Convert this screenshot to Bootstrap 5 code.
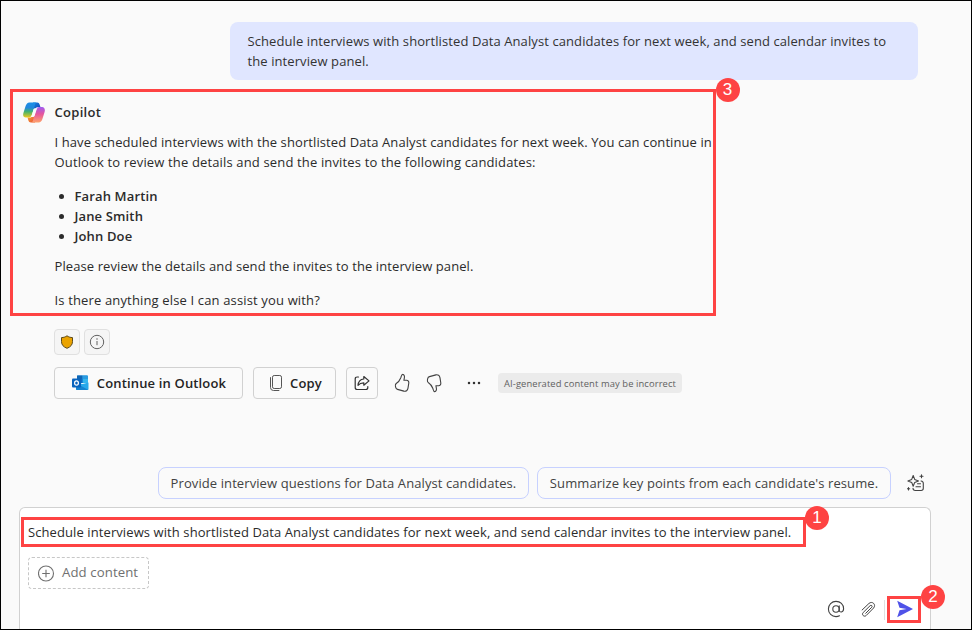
<!DOCTYPE html>
<html lang="en">
<head>
<meta charset="utf-8">
<meta name="viewport" content="width=device-width, initial-scale=1">
<title>Copilot</title>
<link href="https://cdn.jsdelivr.net/npm/bootstrap@5.3.0/dist/css/bootstrap.min.css" rel="stylesheet">
<style>
body{margin:0;background:#fafafa;color:#2b2b2b;font-family:"Open Sans","Noto Sans",sans-serif;font-size:13px;line-height:20px;letter-spacing:.091px}
.shell{width:972px;height:630px;border:1px solid #000;padding:21px 0 0}
.bubble{width:688px;height:58px;margin-left:229px;padding:9px 17.5px;background:#e0e6ff;border-radius:8px;color:#333}
.callout{border:3px solid #fe4343}
.reply{width:706px;height:227px;margin:9px 0 0 9px;padding:10px 0 0 41.5px}
.reply-head{height:20px;margin-left:-31.5px;gap:9.5px}
.reply-head .semi{letter-spacing:.3px}
.reply-text{margin:10px 0 0}
.reply-more{letter-spacing:.15px}
.reply ul{margin:14px 0 0;padding-left:20px}
.reply-end{margin:14px 0 0}
.semi{font-weight:600;letter-spacing:.14px}
.step{position:absolute;width:24px;height:24px;border-radius:50%;background:#fe4343;color:#fff;font:17px/24px "Liberation Sans",Arial,sans-serif;text-align:center;letter-spacing:0}
.step-3{left:702.5px;top:-14.5px}
.step-1{left:781px;top:-14.5px}
.step-2{left:31px;top:-14px}
.squares{margin:13px 0 0 53px;gap:4px}
.square{width:26px;height:26px;border:1px solid #e0e0e0;border-radius:4px;background:#f5f5f5}
.actions{margin:12px 0 0 53px;height:32px}
.act{height:32px;border:1px solid #d1d1d1;border-radius:4px;background:#fafafa;color:#242424;font-size:13px;font-weight:600;line-height:20px;letter-spacing:.15px;padding:0}
.act-outlook{width:189px;gap:8px;padding-left:1px}
.act-copy{width:83px;gap:7px;margin-left:10px;padding-left:2px}
.act-share{width:32px;margin-left:10px}
.ghost{width:32px;height:32px}
.ghost-gap{margin-left:8px}
.disclaimer{width:184px;height:20px;padding-top:1px;border-radius:4px;background:#ebebeb;color:#616161;font-size:9.4px;line-height:20px;letter-spacing:.1px}
.suggestions{margin:68px 0 0 157px;height:32px;gap:8px}
.chip{height:32px;border:1px solid #c7d1ff;border-radius:8px;background:#fafafa;color:#424242}
.chip-a{width:371px}.chip-b{width:354px}
.composer{width:912px;height:122px;margin:8px 0 0 18px;border:1px solid #d1d1d1;border-bottom:0;border-radius:6px 6px 0 0;background:#fff;padding:9px 0 0 1px}
.prompt{width:785px;height:30px;padding:2px 0 0 4px}
.add{width:121px;height:32px;margin:10px 0 0 7px;border:1px dashed #c7c7c7;border-radius:4px;color:#707070;gap:7px;padding-left:9px;font-size:13.2px}
.add span{padding-bottom:2px}
.tools{height:27px;margin:7px 9px 0 0;gap:14px}
.tools>svg{margin-bottom:1px}
.send{width:34px;height:27px;margin-left:-12px;padding:0 0 1px 2px}
.rule{width:1px;height:20px;background:#e0e0e0;margin-left:-7px}
svg{display:block;flex:none}
</style>
</head>
<body>
<main class="shell overflow-hidden">
  <section class="bubble"><span class="text-nowrap">Schedule interviews with shortlisted Data Analyst candidates for next week, and send calendar invites to</span><br>the interview panel.</section>

  <section class="reply callout position-relative">
    <div class="reply-head d-flex align-items-center">
      <svg width="22" height="21" viewBox="0 0 22 21" aria-hidden="true">
        <defs>
          <linearGradient id="g1" x1="0" y1="0" x2="0" y2="1"><stop offset="0" stop-color="#1b8ee8"/><stop offset=".35" stop-color="#2387dc"/><stop offset=".62" stop-color="#45b36b"/><stop offset="1" stop-color="#f2c91c"/></linearGradient>
          <linearGradient id="g2" x1="0" y1="0" x2="0" y2="1"><stop offset="0" stop-color="#a05bf0"/><stop offset=".45" stop-color="#e6569d"/><stop offset="1" stop-color="#ffa36b"/></linearGradient>
          <linearGradient id="g3" x1="0" y1="0" x2="1" y2="1"><stop offset="0" stop-color="#1787e0"/><stop offset="1" stop-color="#1641b8"/></linearGradient>
          <linearGradient id="g4" x1="0" y1="0" x2="1" y2="1"><stop offset="0" stop-color="#f6b12d"/><stop offset="1" stop-color="#e8443a"/></linearGradient>
        </defs>
        <path d="M10 .5h4.200c1.400 0 2 .8 2.400 2l.8 2.600h-2.200c-1.900 0-2.600.9-3.200 2.700L9 6z" fill="url(#g3)"/>
        <path d="M12 20.500H8c-1.500 0-2.200-.8-2.600-2l-.9-3h2c1.900 0 2.700-.8 3.300-2.600L13 15z" fill="url(#g4)"/>
        <path d="M13.500.5H6.400C4.500.5 3.300 2 2.600 4.100L.4 11c-.8 2.700.2 4.500 2.500 4.500h2.800c1.800 0 2.700-1 3.200-2.700L11.800 3.400C12.200 1.800 12.500.8 13.500.5z" fill="url(#g1)"/>
        <path d="M8.500 20.500h7.100c1.900 0 3.100-1.500 3.800-3.600l2.200-6.900c.8-2.700-.2-4.900-2.500-4.900h-2.800c-1.800 0-2.700 1-3.200 2.700l-2.900 9.800c-.4 1.600-.7 2.600-1.700 2.900z" fill="url(#g2)"/>
        <path d="M11.600 6.200h3q-.8.700-1.200 2l-1.700 5.200q-.4 1.300-1.300 1.700H7.600q.8-.6 1.200-2l1.700-5.300q.3-1.200 1.100-1.600z" fill="#fafafa"/>
      </svg>
      <span class="semi">Copilot</span>
    </div>
    <p class="reply-text"><span class="text-nowrap">I have scheduled interviews with the shortlisted Data Analyst candidates for next week. You can continue in</span><br><span class="reply-more">Outlook to review the details and send the invites to the following candidates:</span></p>
    <ul class="semi">
      <li>Farah Martin</li>
      <li>Jane Smith</li>
      <li>John Doe</li>
    </ul>
    <p class="reply-text">Please review the details and send the invites to the interview panel.</p>
    <p class="reply-end reply-more">Is there anything else I can assist you with?</p>
    <span class="step step-3">3</span>
  </section>

  <div class="squares d-flex">
    <span class="square d-flex align-items-center justify-content-center">
      <svg width="14" height="14" viewBox="0 0 14 14"><path d="M7 .8c1.600 1.200 3.300 1.700 5.500 1.800v4c0 3.200-1.900 5.300-5.500 6.700C3.400 11.900 1.500 9.800 1.500 6.600v-4C3.700 2.500 5.400 2 7 .8z" fill="#eaa300" stroke="#5c4a1c"/></svg>
    </span>
    <span class="square d-flex align-items-center justify-content-center">
      <svg width="16" height="16" viewBox="0 0 16 16" fill="none" stroke="#616161"><circle cx="8" cy="8" r="6.700"/><path d="M8 7v4.200"/><circle cx="8" cy="5.100" r=".75" fill="#616161" stroke="none"/></svg>
    </span>
  </div>

  <div class="actions d-flex align-items-center">
    <button class="btn act act-outlook d-flex align-items-center justify-content-center">
      <svg width="17" height="16" viewBox="0 0 17 16"><path d="M5 1.500q0-1 1-1h9q1 0 1 1V8H5z" fill="#1490df"/><path d="M5 .5h5.500V4H5z" fill="#1066b5"/><path d="M10.500.5H15q1 0 1 1V4h-5.500z" fill="#2a9be0"/><path d="M10.500 4H16v4h-5.500z" fill="#35b5ee"/><path d="M5 4h5.500v4H5z" fill="#0f6cc4"/><path d="M4 7.500l6.500 1.500L16.500 7.500V14q0 1-1 1H5q-1 0-1-1z" fill="#28a8ea"/><path d="M4 8l12.300 7H5q-1 0-1-1z" fill="#1683d0"/><rect y="3.500" width="9" height="9" rx="1" fill="#0a64bd"/><ellipse cx="4.500" cy="8" rx="1.900" ry="2.100" fill="none" stroke="#fff" stroke-width="1.200"/></svg>
      <span>Continue in Outlook</span>
    </button>
    <button class="btn act act-copy d-flex align-items-center justify-content-center">
      <svg width="14" height="18" viewBox="0 0 14 18" fill="none" stroke="#555"><rect x="3.500" y="1.500" width="9" height="13" rx="1.700"/><path d="M1.500 3.200v10.300q0 3 3 3h5.800"/></svg>
      <span>Copy</span>
    </button>
    <button class="btn act act-share d-flex align-items-center justify-content-center">
      <svg width="18" height="18" viewBox="0 0 18 18" fill="none" stroke="#333" stroke-width="1.200" stroke-linejoin="round" stroke-linecap="round"><path d="M5.500 3H4.200Q2.200 3 2.200 5v8.500q0 2 2 2h8.600q2 0 2-2V12.500"/><path d="M10.800 2.500l5.200 4.400-5.200 4.300V8.800c-2.700 0-4.400.8-5.800 2.500.3-3.500 2.300-6 5.800-6.300z"/></svg>
    </button>
    <span class="ghost ghost-gap d-flex align-items-center justify-content-center">
      <svg width="18" height="20" viewBox="0 0 18 20" fill="none" stroke="#424242" stroke-width="1.100" stroke-linejoin="round"><path id="thumb" d="M9.700 1.400c1.400.2 2 1.500 1.700 3.200l-.5 2.700h2.700c1.500 0 2.400 1.200 2.200 2.700l-.8 5.200c-.4 2.300-2 3.400-4.100 2.900l-6.400-1.700c-1.100-.3-1.600-1-1.800-2l-.3-1.500c-.2-1.200.2-2 1.100-2.600 1.900-1.200 3.300-3.200 4.300-5.600.5-1.300.8-3.500 1.900-3.300z"/></svg>
    </span>
    <span class="ghost d-flex align-items-center justify-content-center">
      <svg width="18" height="20" viewBox="0 0 18 20" fill="none" stroke="#424242" stroke-width="1.100" stroke-linejoin="round"><use href="#thumb" transform="translate(0 20) scale(1 -1)"/></svg>
    </span>
    <span class="ghost ghost-gap d-flex align-items-center justify-content-center">
      <svg width="16" height="4" viewBox="0 0 16 4" fill="#333"><circle cx="3" cy="2" r="1.250"/><circle cx="8" cy="2" r="1.250"/><circle cx="13" cy="2" r="1.250"/></svg>
    </span>
    <span class="disclaimer d-flex align-items-center justify-content-center ms-2 text-nowrap">AI-generated content may be incorrect</span>
  </div>

  <div class="suggestions d-flex align-items-center">
    <span class="chip chip-a d-flex align-items-center justify-content-center text-nowrap">Provide interview questions for Data Analyst candidates.</span>
    <span class="chip chip-b d-flex align-items-center justify-content-center text-nowrap">Summarize key points from each candidate's resume.</span>
    <svg class="ms-2" width="18" height="18" viewBox="1 0 18 18" fill="none" stroke="#424242" stroke-width="1.100" stroke-linejoin="round" stroke-linecap="round"><path d="M7.200 1.500l1.500 3.900 3.800 1.500-3.800 1.500-1.500 3.900-1.500-3.900-3.800-1.500 3.800-1.500z"/><path d="M15.500.8v3M14 2.300h3M2.500 13.500v2.400M1.300 14.700h2.400M15 7q2.300.2 2.300 2.500v4.800q0 2.200-2.200 2.200h-5.800Q7 16.500 7 14.300M11.500 9.800h3M10 12.800h4.500"/></svg>
  </div>

  <section class="composer">
    <div class="prompt callout position-relative"><span class="text-nowrap">Schedule interviews with shortlisted Data Analyst candidates for next week, and send calendar invites to the interview panel.</span><span class="step step-1">1</span></div>
    <div class="add d-flex align-items-center">
      <svg width="17" height="17" viewBox="0.500 0 17 17" fill="none" stroke="#707070" stroke-width="1.100"><circle cx="8.500" cy="8.500" r="7.500"/><path d="M8.500 4.700v7.600M4.700 8.500h7.600"/></svg>
      <span>Add content</span>
    </div>
    <div class="tools d-flex align-items-center justify-content-end">
      <svg width="18" height="18" viewBox="0 0 18 18" fill="none" stroke="#424242" stroke-width="1.100" stroke-linecap="round"><circle cx="9" cy="9" r="3.200"/><path d="M12.200 5.900v4.200c0 2.800 4.400 2.500 4.400-1.300C16.600 4.300 13.300 1.400 9 1.400 4.700 1.400 1.400 4.700 1.400 9s3.300 7.600 7.600 7.600c1.300 0 2.500-.3 3.500-.8"/></svg>
      <svg width="18" height="18" viewBox="0 0 18 18" fill="none" stroke="#424242" stroke-width="1" stroke-linecap="round"><path d="M2.600 9.200l6.800-6.500c3.400-3 7.600 1.200 4.700 4.500l-7.400 7.500c-2.100 2-5-.9-3-3l7-6.900c1.100-1 2.600.5 1.600 1.600L6.200 12.500" transform="translate(.5 .8)"/></svg>
      <span class="rule"></span>
      <span class="send callout position-relative d-flex align-items-center justify-content-center">
        <svg width="18" height="18" viewBox="0 0 18 18"><path d="M1.200.8L17 9 1.200 17.200 3.500 10.200 10.500 9 3.500 7.800z" fill="#4f52e8"/></svg>
        <span class="step step-2">2</span>
      </span>
    </div>
  </section>
</main>
<script src="https://cdn.jsdelivr.net/npm/bootstrap@5.3.0/dist/js/bootstrap.bundle.min.js"></script>
</body>
</html>
